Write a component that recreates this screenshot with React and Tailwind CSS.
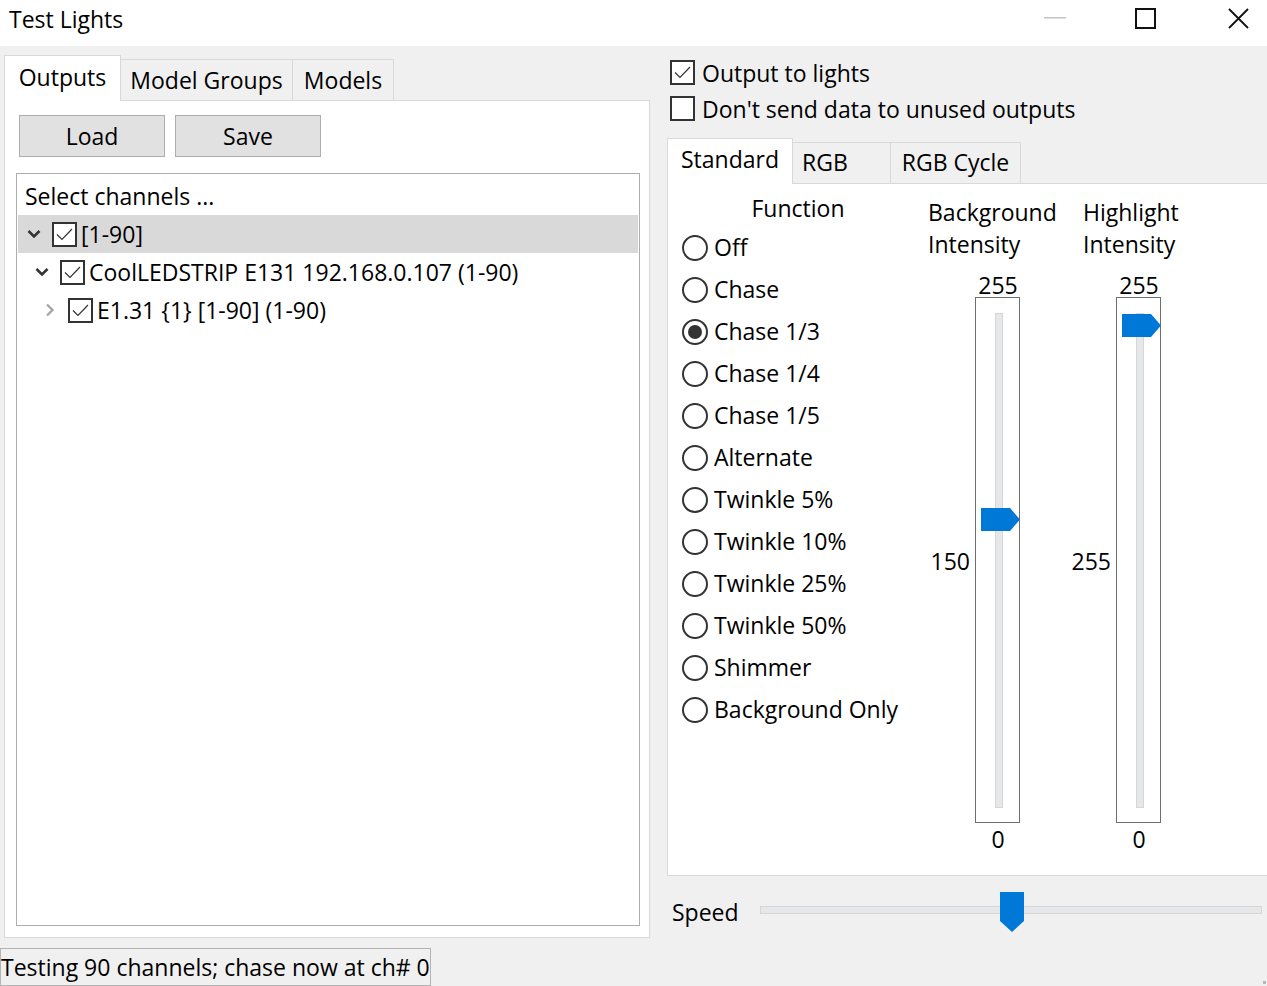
import React from "react";

const FONT = { fontFamily: '"Open Sans", "Noto Sans", "Liberation Sans", sans-serif' };

function CheckBox({ checked }) {
  return (
    <div className="w-[25px] h-[25px] border-2 border-[#333333] bg-white shrink-0 flex items-center justify-center">
      {checked && (
        <svg width="21" height="21" viewBox="0 0 21 21">
          <polyline points="3,10.5 8,15.5 18,5" fill="none" stroke="#333333" strokeWidth="1.2" />
        </svg>
      )}
    </div>
  );
}

function Radio({ checked, label }) {
  return (
    <div className="flex items-center h-[42px]">
      <div className="w-[26px] h-[26px] rounded-full border-2 border-[#333333] bg-white flex items-center justify-center shrink-0">
        {checked && <div className="w-[14px] h-[14px] rounded-full bg-[#333333]" />}
      </div>
      <span className="ml-[6px] leading-[30px] -mt-[2px]">{label}</span>
    </div>
  );
}

function ChevronDown() {
  return (
    <svg width="14" height="10" viewBox="0 0 14 10">
      <polyline points="1.5,2 7,7.5 12.5,2" fill="none" stroke="#333333" strokeWidth="2.6" />
    </svg>
  );
}
function ChevronRight() {
  return (
    <svg width="10" height="14" viewBox="0 0 10 14">
      <polyline points="2,1.5 7.5,7 2,12.5" fill="none" stroke="#a6a6a6" strokeWidth="2.4" />
    </svg>
  );
}

function VSlider({ value, leftLabel }) {
  const top = 16 + ((255 - value) / 255) * 471;
  return (
    <div className="flex flex-col items-end">
      <div className="w-[44px] text-center leading-[24px]">255</div>
      <div className="flex items-center">
        <div className="w-[42px] text-right leading-[24px] mt-[2px]">{leftLabel}</div>
        <div className="ml-[5px] w-[45px] h-[526px] border border-[#6e6e6e] bg-white relative">
          <div className="absolute left-[19px] top-[15px] w-[8px] h-[495px] bg-[#e6e7e8] border border-[#d6d6d6]" />
          <svg className="absolute left-[5px]" style={{ top: top }} width="39" height="23" viewBox="0 0 39 23">
            <polygon points="0,0 29,0 39,11.5 29,23 0,23" fill="#0078d7" />
          </svg>
        </div>
      </div>
      <div className="w-[44px] text-center leading-[24px] mt-[4px]">0</div>
    </div>
  );
}

export default function App() {
  return (
    <div style={FONT} className="w-[1267px] h-[986px] bg-[#f0f0f0] flex flex-col overflow-hidden text-[23px] text-black relative">
      {/* Title bar */}
      <div className="h-[46px] bg-white flex items-center shrink-0">
        <div className="pl-[9px] leading-[30px] -mt-[8px] flex-1">Test Lights</div>
        <div className="flex items-center h-full -mt-[10px] pr-[18px]">
          <svg width="22" height="2" viewBox="0 0 22 2"><rect width="22" height="1.5" fill="#c4c4c4" /></svg>
          <svg className="ml-[69px]" width="21" height="21" viewBox="0 0 21 21"><rect x="1" y="1" width="19" height="19" fill="none" stroke="#111" strokeWidth="2" /></svg>
          <svg className="ml-[72px]" width="21" height="21" viewBox="0 0 21 21"><path d="M1 1 L20 20 M20 1 L1 20" stroke="#111" strokeWidth="1.8" /></svg>
        </div>
      </div>

      {/* Body */}
      <div className="flex flex-1">
        {/* Left column */}
        <div className="w-[650px] flex flex-col shrink-0">
          <div className="pl-[4px] pt-[9px]">
            <div className="flex items-end h-[45px] relative z-10">
              <div className="w-[117px] h-[46px] bg-white border border-b-0 border-[#d9d9d9] flex justify-center leading-[30px] pt-[6px] -mb-px">Outputs</div>
              <div className="w-[172px] h-[41px] bg-[#f0f0f0] border border-l-0 border-b-0 border-[#d9d9d9] flex justify-center leading-[30px] pt-[5px]">Model Groups</div>
              <div className="w-[101px] h-[41px] bg-[#f0f0f0] border border-l-0 border-b-0 border-[#d9d9d9] flex justify-center leading-[30px] pt-[5px]">Models</div>
            </div>
            <div className="w-[646px] h-[838px] bg-white border border-[#d9d9d9] pl-[14px] pt-[14px] flex flex-col">
              <div className="flex gap-[10px]">
                <div className="w-[146px] h-[42px] bg-[#e1e1e1] border border-[#adadad] flex items-center justify-center leading-[30px]">Load</div>
                <div className="w-[146px] h-[42px] bg-[#e1e1e1] border border-[#adadad] flex items-center justify-center leading-[30px]">Save</div>
              </div>
              <div className="-ml-[3px] mt-[16px] w-[624px] h-[753px] border border-[#adadad] bg-white p-px">
                <div className="h-[40px] pl-[7px] pt-[6px] leading-[30px]">Select channels ...</div>
                <div className="h-[38px] bg-[#d9d9d9] flex items-center pl-[9px]">
                  <div className="w-[14px] flex justify-center"><ChevronDown /></div>
                  <div className="ml-[11px]"><CheckBox checked /></div>
                  <span className="ml-[4px] leading-[30px]">[1-90]</span>
                </div>
                <div className="h-[38px] flex items-center pl-[17px]">
                  <div className="w-[14px] flex justify-center"><ChevronDown /></div>
                  <div className="ml-[11px]"><CheckBox checked /></div>
                  <span className="ml-[4px] leading-[30px]">CoolLEDSTRIP E131 192.168.0.107 (1-90)</span>
                </div>
                <div className="h-[38px] flex items-center pl-[25px]">
                  <div className="w-[14px] flex justify-center"><ChevronRight /></div>
                  <div className="ml-[11px]"><CheckBox checked /></div>
                  <span className="ml-[4px] leading-[30px]">E1.31 {"{1}"} [1-90] (1-90)</span>
                </div>
              </div>
            </div>
          </div>
          <div className="mt-[10px] w-[431px] h-[38px] border border-[#b4b4b4] flex items-center leading-[30px] whitespace-nowrap">Testing 90 channels; chase now at ch# 0</div>
        </div>

        {/* Right column */}
        <div className="ml-[17px] flex-1 flex flex-col">
          <div className="pt-[14px] pl-[3px] flex flex-col gap-[11px]">
            <div className="flex items-center h-[25px]">
              <CheckBox checked />
              <span className="ml-[7px] leading-[30px]">Output to lights</span>
            </div>
            <div className="flex items-center h-[25px]">
              <CheckBox />
              <span className="ml-[7px] leading-[30px]">Don't send data to unused outputs</span>
            </div>
          </div>
          <div className="mt-[17px] flex items-end h-[45px] relative z-10">
            <div className="w-[126px] h-[46px] bg-white border border-b-0 border-[#d9d9d9] flex justify-center leading-[30px] pt-[5px] -mb-px">Standard</div>
            <div className="w-[98px] h-[41px] bg-[#f0f0f0] border border-l-0 border-b-0 border-[#d9d9d9] flex justify-start pl-[9px] leading-[30px] pt-[4px]">RGB</div>
            <div className="w-[130px] h-[41px] bg-[#f0f0f0] border border-l-0 border-b-0 border-[#d9d9d9] flex justify-center leading-[30px] pt-[4px]">RGB Cycle</div>
          </div>
          <div className="w-[600px] h-[693px] bg-white border border-r-0 border-[#d9d9d9] flex">
            {/* Function column */}
            <div className="w-[260px] flex flex-col pt-[8px]">
              <div className="text-center leading-[32px]">Function</div>
              <div className="pl-[14px] mt-[3px] flex flex-col">
                <Radio label="Off" />
                <Radio label="Chase" />
                <Radio label="Chase 1/3" checked />
                <Radio label="Chase 1/4" />
                <Radio label="Chase 1/5" />
                <Radio label="Alternate" />
                <Radio label="Twinkle 5%" />
                <Radio label="Twinkle 10%" />
                <Radio label="Twinkle 25%" />
                <Radio label="Twinkle 50%" />
                <Radio label="Shimmer" />
                <Radio label="Background Only" />
              </div>
            </div>
            {/* Background column */}
            <div className="w-[140px] flex flex-col pt-[12px]">
              <div className="leading-[32px]">Background<br />Intensity</div>
              <div className="mt-[13px] w-[92px]">
                <VSlider value={150} leftLabel="150" />
              </div>
            </div>
            {/* Highlight column */}
            <div className="w-[140px] flex flex-col pt-[12px] ml-[1px]">
              <div className="leading-[32px] pl-[14px]">Highlight<br />Intensity</div>
              <div className="mt-[13px] w-[92px]">
                <VSlider value={255} leftLabel="255" />
              </div>
            </div>
          </div>
          {/* Speed */}
          <div className="flex items-center h-[40px] mt-[14px]">
            <span className="ml-[5px] w-[88px] leading-[30px] mt-[4px]">Speed</span>
            <div className="relative w-[502px] h-[8px] bg-[#e6e7e8] border border-[#d6d6d6]">
              <svg className="absolute left-[239px] -top-[15px]" width="24" height="40" viewBox="0 0 24 40">
                <polygon points="0,0 24,0 24,29 12,40 0,29" fill="#0078d7" />
              </svg>
            </div>
          </div>
        </div>
      </div>
      <div className="absolute right-[1px] bottom-[2px] w-[3px] h-[3px] bg-[#b8b8b8]" />
    </div>
  );
}
